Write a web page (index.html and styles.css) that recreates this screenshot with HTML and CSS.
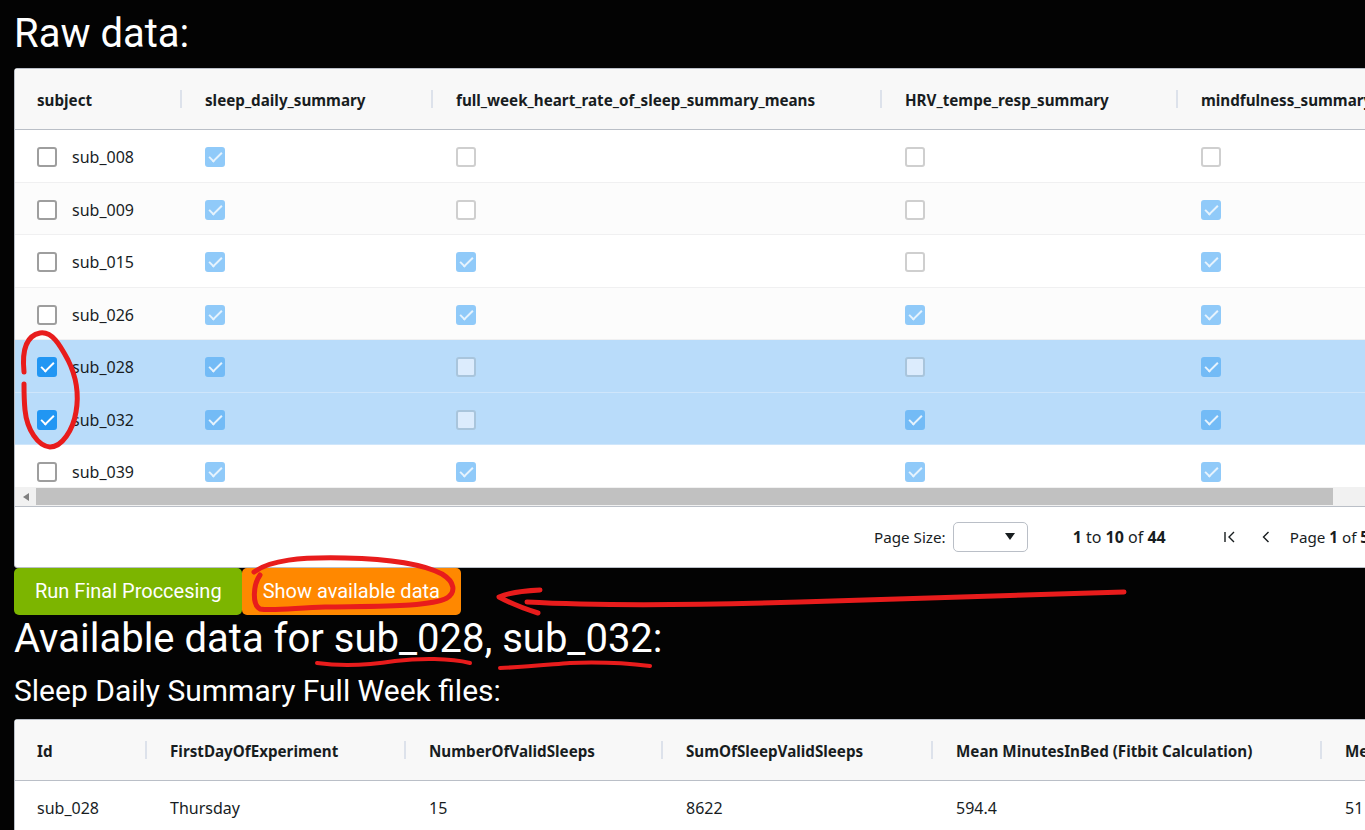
FILE: index.html
```html
<!DOCTYPE html>
<html lang="en">
<head>
  <meta charset="UTF-8" />
  <title>Raw data</title>
  <link rel="stylesheet" href="styles.css">
</head>
<body>
  <h1 class="title-raw">Raw data:</h1>

  <!-- raw data grid -->
  <div class="grid">
    <div class="grid-head cols-raw">
      <div class="hcell">subject</div>
      <div class="hcell">sleep_daily_summary</div>
      <div class="hcell">full_week_heart_rate_of_sleep_summary_means</div>
      <div class="hcell">HRV_tempe_resp_summary</div>
      <div class="hcell">mindfulness_summary</div>
    </div>
    <div class="grid-body">
      <div class="row cols-raw">
        <div class="cell"><span class="box"></span>sub_008</div>
        <div class="cell"><span class="box ro on"></span></div>
        <div class="cell"><span class="box ro"></span></div>
        <div class="cell"><span class="box ro"></span></div>
        <div class="cell"><span class="box ro"></span></div>
      </div>
      <div class="row odd cols-raw">
        <div class="cell"><span class="box"></span>sub_009</div>
        <div class="cell"><span class="box ro on"></span></div>
        <div class="cell"><span class="box ro"></span></div>
        <div class="cell"><span class="box ro"></span></div>
        <div class="cell"><span class="box ro on"></span></div>
      </div>
      <div class="row cols-raw">
        <div class="cell"><span class="box"></span>sub_015</div>
        <div class="cell"><span class="box ro on"></span></div>
        <div class="cell"><span class="box ro on"></span></div>
        <div class="cell"><span class="box ro"></span></div>
        <div class="cell"><span class="box ro on"></span></div>
      </div>
      <div class="row odd cols-raw">
        <div class="cell"><span class="box"></span>sub_026</div>
        <div class="cell"><span class="box ro on"></span></div>
        <div class="cell"><span class="box ro on"></span></div>
        <div class="cell"><span class="box ro on"></span></div>
        <div class="cell"><span class="box ro on"></span></div>
      </div>
      <div class="row selected cols-raw">
        <div class="cell"><span class="box on"></span>sub_028</div>
        <div class="cell"><span class="box ro on"></span></div>
        <div class="cell"><span class="box ro"></span></div>
        <div class="cell"><span class="box ro"></span></div>
        <div class="cell"><span class="box ro on"></span></div>
      </div>
      <div class="row selected cols-raw">
        <div class="cell"><span class="box on"></span>sub_032</div>
        <div class="cell"><span class="box ro on"></span></div>
        <div class="cell"><span class="box ro"></span></div>
        <div class="cell"><span class="box ro on"></span></div>
        <div class="cell"><span class="box ro on"></span></div>
      </div>
      <div class="row cols-raw">
        <div class="cell"><span class="box"></span>sub_039</div>
        <div class="cell"><span class="box ro on"></span></div>
        <div class="cell"><span class="box ro on"></span></div>
        <div class="cell"><span class="box ro on"></span></div>
        <div class="cell"><span class="box ro on"></span></div>
      </div>
    </div>
    <div class="scrollbar">
      <span class="arrow"></span>
      <span class="thumb"></span>
    </div>
    <div class="pager">
      <span>Page Size:</span>
      <span class="size-select"><span class="caret"></span></span>
      <span class="count"><b>1</b> to <b>10</b> of <b>44</b></span>
      <svg class="nav" width="14" height="14" viewBox="0 0 14 14"><path d="M2 2v10M11 2L6 7l5 5" fill="none" stroke="#181d1f" stroke-width="1.4"/></svg>
      <svg class="nav" width="14" height="14" viewBox="0 0 14 14"><path d="M9.5 2L4.5 7l5 5" fill="none" stroke="#181d1f" stroke-width="1.4"/></svg>
      <span class="page-no">Page <b>1</b> of <b>5</b></span>
    </div>
  </div>

  <div class="actions">
    <button class="btn green">Run Final Proccesing</button>
    <button class="btn orange">Show available data</button>
  </div>

  <h1 class="title-avail">Available data for sub_028, sub_032:</h1>
  <h2 class="title-files">Sleep Daily Summary Full Week files:</h2>

  <!-- summary grid -->
  <div class="grid">
    <div class="grid-head cols-week">
      <div class="hcell">Id</div>
      <div class="hcell">FirstDayOfExperiment</div>
      <div class="hcell">NumberOfValidSleeps</div>
      <div class="hcell">SumOfSleepValidSleeps</div>
      <div class="hcell">Mean MinutesInBed (Fitbit Calculation)</div>
      <div class="hcell">Me</div>
    </div>
    <div class="row cols-week">
      <div class="cell">sub_028</div>
      <div class="cell">Thursday</div>
      <div class="cell">15</div>
      <div class="cell">8622</div>
      <div class="cell">594.4</div>
      <div class="cell">51</div>
    </div>
  </div>

  <!-- red pen marks drawn over the screenshot -->
  <svg class="pen" width="1365" height="830" viewBox="0 0 1365 830">
    <path d="M24 372C22 352 25 336 40 333C52 331 60 345 68 360C76 376 79 395 76 412C73 430 62 447 50 447C38 446 27 430 25 410C24 400 24 392 24 384"/>
    <path d="M254 572C270 560 300 557 345 558C390 559 425 565 442 574C455 582 456 592 447 598C430 607 380 606 325 607C295 608 272 611 260 609C252 605 253 585 260 575"/>
    <path d="M1124 592C1000 596 900 599 800 602C700 605 600 606 527 602"/>
    <path d="M540 590C520 591 508 593 499 597C510 603 525 609 538 613"/>
    <path class="thin" d="M317 663C345 667 370 665 395 661C420 658 450 658 470 663"/>
    <path class="thin" d="M500 668C525 667 545 665 570 663C595 662 625 663 650 666"/>
  </svg>
</body>
</html>
```

FILE: styles.css
```css
html, body {
    height: 100%;
    overflow: hidden;
}
body {
    position: relative;
    margin: 0;
    padding: 0 0 0 14px;
    background: #030303;
    color: #fff;
    font-family: Roboto, sans-serif;
}
h1, h2 {
    margin: 0;
    font-weight: 400;
    white-space: nowrap;
}
.title-raw {
    height: 68px;
    font-size: 40px;
    line-height: 68px;
}
.title-avail {
    height: 48px;
    font-size: 40px;
    line-height: 48px;
}
.title-files {
    height: 56px;
    font-size: 30px;
    line-height: 56px;
}

.grid {
    width: 1490px;
    background: #fff;
    border: 1px solid #babfc7;
    border-radius: 3px;
    color: #181d1f;
    font-family: "Noto Sans", sans-serif;
    font-size: 16px;
}
.grid-head {
    height: 60px;
    background: #f8f8f8;
    border-bottom: 1px solid #babfc7;
    font-weight: 700;
    font-size: 15.2px;
}
.cols-raw {
    display: grid;
    grid-template-columns: 167px 251px 449px 296px 276px;
}
.cols-week {
    display: grid;
    grid-template-columns: 132px 259px 257px 270px 389px 183px;
}
.hcell {
    position: relative;
    display: flex;
    align-items: center;
    padding: 2px 0 0 23px;
    white-space: nowrap;
}
.hcell:first-child, .cell:first-child {
    padding-left: 22px;
}
.hcell + .hcell::before {
    content: "";
    position: absolute;
    left: -2px;
    top: 21px;
    width: 2px;
    height: 18px;
    background: #dde2eb;
}
.grid-body {
    height: 357px;
    overflow: hidden;
}
.row {
    height: 52.5px;
    box-sizing: border-box;
    border-bottom: 1px solid #f0f0f1;
    background: #fff;
}
.row.odd {
    background: #fcfcfc;
}
.row.selected {
    background: #b9dcfa;
    border-bottom-color: #cfe6fb;
}
.cell {
    display: flex;
    align-items: center;
    padding: 2.5px 0 0 23px;
    white-space: nowrap;
}
.box {
    position: relative;
    box-sizing: border-box;
    width: 20px;
    height: 20px;
    margin-right: 15px;
    background: #fff;
    border: 2px solid #9e9e9e;
    border-radius: 3px;
    flex: none;
}
.box.ro {
    border-color: #cfcfcf;
}
.box.on {
    background: #2196f3;
    border-color: #2196f3;
}
.box.ro.on {
    background: #90caf9;
    border-color: #90caf9;
}
.selected .box.ro {
    background: #dcecfd;
    border-color: #a9c5dc;
}
.selected .box.ro.on {
    background: #73bbf6;
    border-color: #73bbf6;
}
.box.on::after {
    content: "";
    position: absolute;
    left: 5px;
    top: 0;
    width: 5px;
    height: 11px;
    border: solid #fff;
    border-width: 0 2.5px 2.5px 0;
    transform: rotate(45deg);
}
.box.ro.on::after {
    border-color: #e6f3fd;
}

.scrollbar {
    display: flex;
    align-items: center;
    height: 19px;
    background: #f1f1f1;
    border-bottom: 1px solid #babfc7;
}
.arrow {
    width: 0;
    height: 0;
    margin: 0 7px 0 8px;
    border: solid transparent;
    border-width: 4px 6px 4px 0;
    border-right-color: #808080;
}
.thumb {
    width: 1297px;
    height: 17px;
    background: #c1c1c1;
}
.pager {
    display: flex;
    align-items: center;
    justify-content: flex-end;
    height: 60px;
    padding-right: 136px;
    font-size: 15.2px;
}
.size-select {
    position: relative;
    box-sizing: border-box;
    width: 75px;
    height: 30px;
    margin-left: 7px;
    background: #fff;
    border: 1px solid #babfc7;
    border-radius: 5px;
}
.caret {
    position: absolute;
    right: 12px;
    top: 10px;
    width: 0;
    height: 0;
    border: solid transparent;
    border-width: 7px 5.5px 0;
    border-top-color: #181d1f;
}
.count {
    margin: 0 57px 0 45px;
    font-size: 16px;
}
.nav {
    margin-right: 22px;
}
.page-no {
    margin-left: -5px;
}

.actions {
    display: flex;
}
.btn {
    height: 47px;
    padding: 0 21px 2px;
    border: none;
    border-radius: 5px;
    color: #fff;
    font-family: Roboto, sans-serif;
    font-size: 20px;
    cursor: pointer;
}
.btn.green {
    padding-right: 20px;
    background: #7cb500;
}
.btn.orange {
    background: #ff8800;
}

.pen {
    position: absolute;
    left: 0;
    top: 0;
    pointer-events: none;
}
.pen path {
    fill: none;
    stroke: #e81c1c;
    stroke-width: 5;
    stroke-linecap: round;
    stroke-linejoin: round;
}
.pen path.thin {
    stroke-width: 4;
}
```
